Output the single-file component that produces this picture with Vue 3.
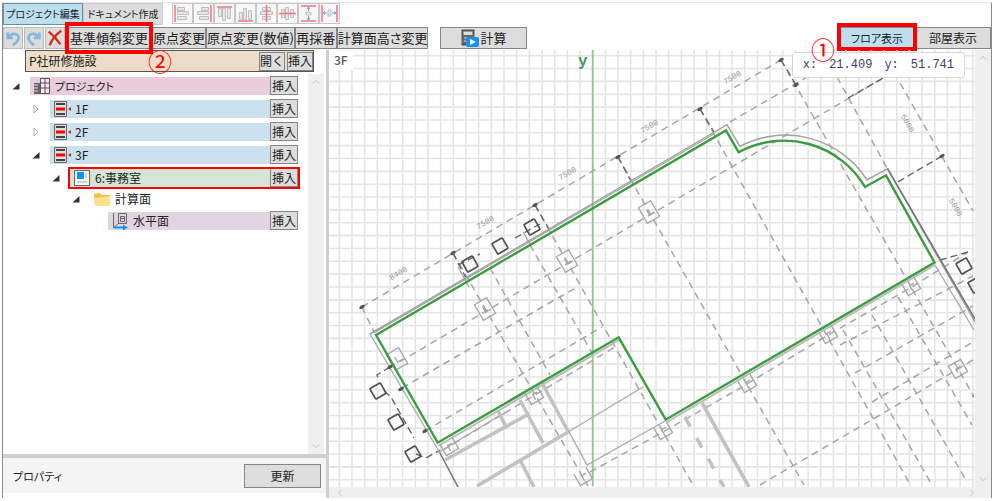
<script setup>
import { ref } from 'vue'

const alignIcons = [
  { name: '左揃え', red: 'M3 2V19', grey: ['M5.500 4.500h7v3h-7z', 'M5.500 8.500h11v3h-11z', 'M5.500 13.500h9v3h-9z'] },
  { name: '右揃え', red: 'M18 2V19', grey: ['M8.500 4.500h7v3h-7z', 'M4.500 8.500h11v3h-11z', 'M6.500 13.500h9v3h-9z'] },
  { name: '上揃え', red: 'M3 4H18', grey: ['M4.500 5.500h3v8h-3z', 'M8.500 5.500h3v12h-3z', 'M13.500 5.500h3v10h-3z'] },
  { name: '下揃え', red: 'M3 18H18', grey: ['M4.500 9.500h3v7h-3z', 'M8.500 5.500h3v11h-3z', 'M13.500 7.500h3v9h-3z'] },
  { name: '左右中央', red: 'M10.500 2V19', grey: ['M6.500 4.500h8v3h-8z', 'M4.500 8.500h12v3h-12z', 'M6.500 13.500h8v3h-8z'] },
  { name: '上下中央', red: 'M2 10.500H19', grey: ['M4.500 6.500h3v8h-3z', 'M8.500 4.500h3v12h-3z', 'M13.500 6.500h3v8h-3z'] },
  { name: '上下等間隔', red: 'M3 3H18M3 18H18', grey: ['M8 9h5v3H8z'], blue: 'M10.500 4v4M10.500 13v4M9 6l1.500-2 1.500 2M9 15l1.500 2 1.500-2' },
  { name: '左右等間隔', red: 'M3 2V19M18 2V19', grey: ['M9 7h3v6H9z'], blue: 'M4 10h4M13 10h4M6 8.500L4 10l2 1.500M15 8.500l2 1.500-2 1.500' },
]

const tree = [
  { label: 'プロジェクト', level: 0, icon: 'building', tone: 'pink', toggle: 'open', insert: true },
  { label: '1F', level: 1, icon: 'floor', tone: 'blue', toggle: 'closed', insert: true },
  { label: '2F', level: 1, icon: 'floor', tone: 'blue', toggle: 'closed', insert: true },
  { label: '3F', level: 1, icon: 'floor', tone: 'blue', toggle: 'open', insert: true },
  { label: '6:事務室', level: 2, icon: 'room', tone: 'green', toggle: 'open', insert: true, marked: true },
  { label: '計算面', level: 3, icon: 'folder', tone: 'plain', toggle: 'open' },
  { label: '水平面', level: 4, icon: 'plane', tone: 'mauve', insert: true },
]

const facility = ref('P社研修施設')

// Grid lines, in plan coordinates
const gridX = Array.from({ length: 160 }, (_, i) => 339.3 + i * 12.67)
const gridY = Array.from({ length: 100 }, (_, i) => 55.7 + i * 12.85)

const dashed = [
  'M362 307L781 60', 'M730 122L845 55', 'M389 368L885 77', 'M402 388L577 287',
  'M425 431L602 327', 'M443 450L615 347', 'M590 472L663 432L742 387L823 338L910 288L968 252',
  'M840 345L973 276', 'M855 373L973 306', 'M872 402L973 342', 'M760 485L875 418L973 360',
  'M362 307L374 332', 'M453 253L588 486', 'M490 268L550 375', 'M535 205L693 485',
  'M530 245L592 353', 'M618 157L804 485', 'M700 109L911 486', 'M781 60L973 395',
  'M837 77L887 168', 'M900 83L973 211', 'M843 330L932 485', 'M872 315L967 482', 'M898 297L972 425',
]
const darkDashed = [
  'M453 253L466 278', 'M535 205L549 229', 'M618 157L631 181', 'M700 109L714 132', 'M781 60L796 85',
  'M942 156L896 183', 'M848 98L885 77', 'M390 367L377 375L379 381', 'M384 391L391 397L414 438',
  'M416 454L426 458L440 450', 'M940 260L968 252', 'M458 265L480 254', 'M515 238L540 224',
]
const outline = 'M376 335L726 130.500L738.700 152.300A94 94 0 0 1 865 187L886 175.300L934.500 262.500L665.700 419.700L618.700 337.300L437.700 442.700Z'
const outerWall = 'M370 334L727 124.700L740 146.300A97 97 0 0 1 867 180L887.500 168.700L975 322'
const thinWalls = [
  'M370 334L440 453', 'M568 432L643 387', 'M568 430L587 465L665 421', 'M935 265L974 330',
  'M438 453L497 417L505 413', 'M458 267L469 287', 'M523 232L531 246',
]
const thickWalls = [
  'M445 460L527 415', 'M477 486L568 432', 'M520 460L534 487', 'M520 400L543 443',
  'M542 383L568 431', 'M498 411L505 425', 'M702 403L749 487',
]
const columns = [
  [397, 359], [485, 309], [567, 261], [649, 212],
]
const footings = [
  [449, 446], [534, 395], [583, 476], [663, 430], [747, 383], [828, 334], [911, 286],
]
const posts = [
  [378, 391], [396, 422], [413, 454], [470, 264], [500, 246], [532, 227], [964, 266], [976, 285],
]
const nodes = [
  [362, 307], [453, 253], [535, 205], [618, 157], [700, 109], [781, 60], [796, 85], [942, 156],
  [390, 367], [401, 389], [425, 431],
]
const dims = [
  [398, 273, -30, '8400'], [485, 222, -30, '7500'], [567, 173, -30, '7500'], [649, 126, -30, '7500'],
  [732, 77, -30, '7500'], [908, 123, 60, '5000'], [956, 207, 60, '5000'],
]
</script>

<template>
  <div class="app">
    <nav class="tabs">
      <button class="btn tab active" type="button">プロジェクト編集</button>
      <button class="btn tab" type="button">ドキュメント作成</button>
      <div class="aligns">
        <button v-for="a in alignIcons" :key="a.name" class="align" type="button" :aria-label="a.name">
          <svg viewBox="0 0 21 21" width="21" height="21">
            <path v-for="g in a.grey" :key="g" :d="g" fill="#e6e6e6" stroke="#c0c0c0" />
            <path :d="a.red" stroke="#ff7070" stroke-width="1.500" fill="none" />
            <path v-if="a.blue" :d="a.blue" stroke="#58a8e8" fill="none" />
          </svg>
        </button>
      </div>
    </nav>

    <div class="toolbar">
      <div class="group">
        <button class="btn icon" type="button" aria-label="元に戻す">
          <svg viewBox="0 0 20 20" width="18" height="18">
            <path d="M4 4v6h6M5 9c4-6 12-4 11 2-1 4-4 5-6 7" fill="none" stroke="#82b9df" stroke-width="3" />
          </svg>
        </button>
        <button class="btn icon" type="button" aria-label="やり直し">
          <svg viewBox="0 0 20 20" width="18" height="18">
            <path d="M16 4v6h-6M15 9C11 3 3 5 4 11c1 4 4 5 6 7" fill="none" stroke="#82b9df" stroke-width="3" />
          </svg>
        </button>
        <button class="btn icon" type="button" aria-label="削除">
          <svg viewBox="0 0 20 20" width="18" height="18">
            <path d="M3 3c5 4 9 8 13 14M17 2C11 6 7 11 4 18" fill="none" stroke="#d9291c" stroke-width="2.500" />
          </svg>
        </button>
      </div>
      <div class="marked-tool">
        <button class="btn" type="button">基準傾斜変更</button>
        <span class="step step-two">②</span>
      </div>
      <div class="edits">
        <button class="btn" type="button">原点変更</button>
        <button class="btn" type="button">原点変更(数値)</button>
        <button class="btn" type="button">再採番</button>
        <button class="btn" type="button">計算面高さ変更</button>
      </div>
      <button class="btn calc" type="button">
        <svg viewBox="0 0 18 18" width="18" height="18">
          <path d="M1.500 1.500h11v14h-11z" fill="#ddd" stroke="#555" stroke-width="2" />
          <path d="M1 6h12v9H1z" fill="#666" />
          <path d="M3 9h8M3 12h8" stroke="#ddd" />
          <rect x="5" y="8" width="13" height="10" rx="2" fill="#1590f5" />
          <path d="M9 10l6 3-6 3z" fill="#fff" />
        </svg>
        計算
      </button>
      <div class="views">
        <div class="marked-view">
          <button class="btn active" type="button">フロア表示</button>
          <span class="step step-one">①</span>
        </div>
        <button class="btn room-view" type="button">部屋表示</button>
      </div>
    </div>

    <main class="work">
      <aside class="side">
        <div class="facility">
          <input v-model="facility" aria-label="施設名" />
          <button class="btn insert" type="button">開く</button>
          <button class="btn insert" type="button">挿入</button>
        </div>
        <div class="tree-pane">
          <ul class="tree">
            <li v-for="n in tree" :key="n.label" :class="['node', 'level-' + n.level, { short: n.icon === 'folder' }]">
              <svg class="toggle" viewBox="0 0 10 10" width="10" height="10">
                <path v-if="n.toggle === 'open'" d="M8.500 2v6.500H1.500z" fill="#333" />
                <path v-if="n.toggle === 'closed'" d="M3 1l4 4-4 4z" fill="#fff" stroke="#aaa" />
              </svg>
              <div :class="['bar', n.tone, { marked: n.marked }]">
                <svg v-if="n.icon === 'building'" viewBox="0 0 18 18" width="18" height="18">
                  <path d="M1 6h6v11H1z" fill="#666" />
                  <path d="M1 8h4M1 11h4M1 14h4" stroke="#ddd" />
                  <path d="M7.500 1.500h9v15h-9z" fill="#f5e8ef" stroke="#555" />
                  <path d="M12 1v16M7 6h10M7 11h10" stroke="#555" />
                </svg>
                <svg v-else-if="n.icon === 'floor'" viewBox="0 0 18 18" width="18" height="18">
                  <path d="M1.500 1.500h12v15h-12z" fill="#ddd" stroke="#666" />
                  <path d="M3 4h9M3 14h9" stroke="#444" stroke-width="2" />
                  <path d="M3 9h9" stroke="#f00" stroke-width="3" />
                  <path d="M18 7v4l-3-2z" fill="#c22" />
                </svg>
                <svg v-else-if="n.icon === 'room'" viewBox="0 0 18 18" width="18" height="18">
                  <path d="M1.500 1.500h15v15h-15z" fill="#f6f6f6" stroke="#666" />
                  <path d="M4 3h7v7H4z" fill="#1590f5" />
                  <path d="M4 13h10M13 4v5" stroke="#aaa" />
                </svg>
                <svg v-else-if="n.icon === 'folder'" viewBox="0 0 18 18" width="18" height="18">
                  <path d="M1 4l6-1 2 2h8v11H2z" fill="#edbf45" />
                  <path d="M1 8l16-2v10H2z" fill="#ffe18b" />
                </svg>
                <svg v-else viewBox="0 0 18 18" width="18" height="18">
                  <path d="M2.500 1v15L7 11.500h8.500v-10h-8v10" fill="none" stroke="#666" />
                  <path d="M9.500 4.500h4v5h-4zM9 6.500h5" fill="none" stroke="#666" />
                  <path d="M3 15.500h10" stroke="#1590f5" stroke-width="2" />
                  <path d="M12 12.500l5 3-5 3z" fill="#1590f5" />
                </svg>
                <span class="label">{{ n.label }}</span>
                <button v-if="n.insert" class="btn insert" type="button">挿入</button>
              </div>
            </li>
          </ul>
          <div class="scroll vertical">
            <svg viewBox="0 0 10 6" width="8" height="6"><path d="M1 5l4-4 4 4" fill="none" stroke="#b6b6b6" /></svg>
            <svg viewBox="0 0 10 6" width="8" height="6"><path d="M1 1l4 4 4-4" fill="none" stroke="#b6b6b6" /></svg>
          </div>
        </div>
        <div class="property">
          <span>プロパティ</span>
          <button class="btn update" type="button">更新</button>
        </div>
        <div class="property-body"></div>
      </aside>

      <section class="plan">
        <div class="canvas">
          <svg class="drawing" width="100%" height="100%">
            <g transform="translate(-329 -50)" fill="none">
              <g stroke="#e5e5e5" stroke-width="1.600">
                <path v-for="x in gridX" :key="'x' + x" :d="`M${x} 50V1400`" />
                <path v-for="y in gridY" :key="'y' + y" :d="`M329 ${y}H2400`" />
              </g>
              <path d="M592.700 50V486" stroke="#8cc88c" stroke-width="1.800" />
              <g stroke="#a6a6a6" stroke-width="1.500" stroke-dasharray="7 5">
                <path v-for="d in dashed" :key="d" :d="d" />
              </g>
              <g stroke="#666" stroke-width="1.400" stroke-dasharray="7 4">
                <path v-for="d in darkDashed" :key="d" :d="d" />
              </g>
              <g stroke="#aaa" stroke-width="1.400">
                <path v-for="d in thinWalls" :key="d" :d="d" />
              </g>
              <g stroke="#c2c2c2" stroke-width="3.600">
                <path v-for="d in thickWalls" :key="d" :d="d" />
                <path d="M685 417L724 487" stroke-dasharray="11 13" />
              </g>
              <path :d="outerWall" stroke="#a2a2a2" stroke-width="1.500" />
              <path d="M374 333L714 134" stroke="#999" />
              <path d="M887.500 168.700L975 319M440 453L458 487" stroke="#777" stroke-width="1.600" />
              <path d="M935 265L667 422M619 340L438 446" stroke="#bbb" stroke-width="2" />
              <g stroke="#a5a5a5" stroke-width="1.300">
                <g v-for="c in columns" :key="c.join()" :transform="`translate(${c[0]} ${c[1]}) rotate(-30)`">
                  <path d="M-7-9H7V9H-7zM-1-3V3H5" />
                </g>
                <g v-for="c in footings" :key="c.join()" :transform="`translate(${c[0]} ${c[1]}) rotate(-30)`">
                  <path d="M-7-6V7H7V-6M-1 5V-1H4" />
                </g>
                <path d="M-7-7H7V7H-7zM-2 3V-1H3" transform="translate(958 369) rotate(-30)" />
              </g>
              <g stroke="#505050" stroke-width="1.700">
                <rect v-for="p in posts" :key="p.join()" x="-6" y="-6" width="12" height="12" rx="1"
                  :transform="`translate(${p[0]} ${p[1]}) rotate(-30)`" />
              </g>
              <g fill="#555">
                <ellipse v-for="p in nodes" :key="p.join()" :cx="p[0]" :cy="p[1]" rx="3" ry="1.600"
                  :transform="`rotate(-30 ${p[0]} ${p[1]})`" />
              </g>
              <path :d="outline" stroke="#3a9d3f" stroke-width="2.400" />
              <g class="dims">
                <text v-for="d in dims" :key="d.join()" text-anchor="middle"
                  :transform="`translate(${d[0]} ${d[1]}) rotate(${d[2]})`" y="3">{{ d[3] }}</text>
              </g>
              <text class="axis" x="578" y="66">y</text>
              <circle cx="973" cy="396" r="1.200" fill="#f66" />
            </g>
          </svg>
          <span class="floor-name">3F</span>
          <output class="coords"><span>x:</span><span>21.409</span><span>y:</span><span>51.741</span></output>
        </div>
        <div class="scroll vertical">
          <svg viewBox="0 0 10 6" width="8" height="6"><path d="M1 5l4-4 4 4" fill="none" stroke="#b6b6b6" /></svg>
          <svg viewBox="0 0 10 6" width="8" height="6"><path d="M1 1l4 4 4-4" fill="none" stroke="#b6b6b6" /></svg>
        </div>
        <div class="scroll horizontal">
          <svg viewBox="0 0 6 10" width="6" height="8"><path d="M5 1L1 5l4 4" fill="none" stroke="#b6b6b6" /></svg>
          <svg viewBox="0 0 6 10" width="6" height="8"><path d="M1 1l4 4-4 4" fill="none" stroke="#b6b6b6" /></svg>
        </div>
      </section>
    </main>
  </div>
</template>

<style>
body {
  margin: 0;
  background: #fff;
}
</style>

<style scoped>
* {
  box-sizing: border-box;
}
.app {
  display: flex;
  flex-direction: column;
  height: calc(100vh - 5px);
  margin: 2px 2px 3px;
  border: solid #8a8a8a;
  border-width: 0 1px;
  border-top: 1px solid #e8e8e8;
  font: 13px/16px "Noto Sans CJK JP", sans-serif;
  color: #222;
}
svg {
  display: block;
  flex: none;
}
.btn {
  display: flex;
  align-items: center;
  justify-content: center;
  height: 22px;
  padding: 0;
  border: 1px solid #858585;
  background: #ddd;
  color: #222;
  font: 13px/16px "Noto Sans CJK JP", sans-serif;
  white-space: nowrap;
}
.btn.active {
  background: #bcdff0;
  border-color: #6c8fa3;
}
.tabs {
  display: flex;
  height: 22px;
}
.tab {
  width: 80px;
  border-color: #ccc;
  font-size: 10px;
  font-feature-settings: "palt";
}
.aligns {
  display: flex;
  margin-left: 9px;
}
.align {
  width: 21px;
  height: 21px;
  padding: 0;
  border: 1px solid #c4c8ca;
  background: #f7f7f7;
  overflow: hidden;
}
.align svg {
  margin: -1px;
}
.toolbar {
  display: flex;
  align-items: center;
  height: 25px;
}
.group {
  display: flex;
  gap: 1px;
}
.icon {
  width: 20px;
  border-color: #bbb;
}
.marked-tool {
  position: relative;
  margin-left: 2px;
}
.marked-tool .btn {
  width: 84px;
}
.marked-tool::after,
.marked-view::after {
  content: "";
  position: absolute;
  inset: -5px -2px;
  border: 4px solid #f00;
  pointer-events: none;
}
.edits {
  display: flex;
  margin-left: 1px;
}
.edits .btn {
  min-width: 42px;
  font-feature-settings: "palt";
}
.calc {
  width: 87px;
  gap: 1px;
  margin-left: 12px;
}
.views {
  display: flex;
  margin-left: auto;
}
.marked-view {
  position: relative;
}
.views .btn {
  width: 76px;
  font-size: 12px;
  font-feature-settings: "palt";
}
.marked-view .btn {
  font-size: 11px;
}
.marked-view::after {
  inset: -4px -2px -2px;
}
.step {
  position: absolute;
  z-index: 2;
  color: #f00;
  font-size: 24px;
  line-height: 24px;
}
.step-two {
  left: 81px;
  top: 22px;
}
.step-one {
  left: -28px;
  top: 10px;
}
.work {
  display: flex;
  flex: 1;
  min-height: 0;
}
.side {
  display: flex;
  flex-direction: column;
  width: 326px;
  border-right: 3px solid #cfcfcf;
}
.facility {
  display: flex;
  align-items: center;
  gap: 2px;
  height: 22px;
  margin: 0 12px 2px 22px;
  border: 1px solid #555;
  background: #eddcc6;
}
.facility input {
  flex: 1;
  min-width: 0;
  padding: 0 3px;
  border: 0;
  background: transparent;
  color: #222;
  font: 12px/16px "Noto Sans CJK JP", sans-serif;
}
.insert {
  width: 28px;
  height: 19px;
  font-size: 12px;
}
.facility .insert {
  width: 26px;
}
.tree-pane {
  display: flex;
  flex: 1;
  min-height: 0;
}
.tree {
  flex: 1;
  margin: 0;
  padding: 0 10px 0 8px;
  list-style: none;
}
.node {
  display: flex;
  align-items: center;
  height: 23px;
}
.node.short {
  height: 20px;
}
.level-1 { padding-left: 20px; }
.level-2 { padding-left: 40px; }
.level-3 { padding-left: 60px; }
.level-4 { padding-left: 78px; }
.bar {
  display: flex;
  flex: 1;
  align-items: center;
  height: 18px;
  margin-left: 9px;
  padding-left: 3px;
}
.label {
  flex: 1;
  padding-left: 4px;
  font-size: 12px;
  font-feature-settings: "palt";
}
.level-0 .label {
  font-size: 11px;
}
.pink { background: #e8cddb; }
.blue { background: #cbe1ed; }
.green { background: #d4e5d6; }
.mauve { background: #e2d5e2; }
.bar.marked {
  outline: 2px solid #f00;
}
.scroll {
  display: flex;
  align-items: center;
  justify-content: space-between;
  background: #efefef;
}
.vertical {
  flex-direction: column;
  width: 16px;
  padding: 5px 0;
}
.tree-pane .vertical {
  margin-right: 2px;
}
.property {
  display: flex;
  align-items: center;
  justify-content: space-between;
  height: 39px;
  padding: 0 5px 0 10px;
  border-top: 4px solid #cfcfcf;
  background: #f4f4f4;
  font-size: 11px;
  font-feature-settings: "palt";
}
.update {
  width: 77px;
  height: 24px;
  font-size: 12px;
}
.property-body {
  height: 5px;
}
.plan {
  display: grid;
  flex: 1;
  min-width: 0;
  grid-template: minmax(0, 1fr) 11px / minmax(0, 1fr) 16px;
}
.plan .horizontal {
  grid-column: 1 / 3;
  padding: 0 16px 0 8px;
}
.canvas {
  position: relative;
  overflow: hidden;
}
.drawing {
  position: absolute;
  inset: 0;
}
.dims {
  fill: #999;
  font: 8px "Liberation Mono", monospace;
}
.axis {
  fill: #3a9d5f;
  font: bold 16px "Liberation Mono", monospace;
}
.floor-name {
  position: absolute;
  left: 0;
  top: 0;
  padding: 2px 5px;
  background: #fff;
  color: #555;
  font-size: 12px;
  font-weight: 500;
}
.coords {
  position: absolute;
  right: 10px;
  top: 2px;
  display: flex;
  gap: 12px;
  padding: 4px 10px;
  border: 1px solid #d8d8d8;
  border-radius: 3px;
  background: #fff;
  color: #3c3c6c;
  font: 12px/16px "Liberation Mono", monospace;
}
</style>
